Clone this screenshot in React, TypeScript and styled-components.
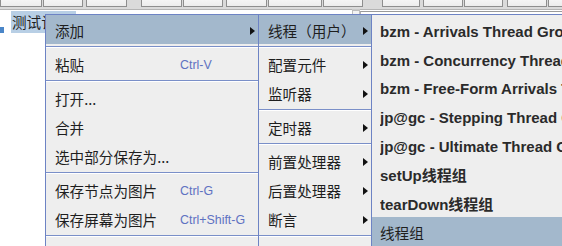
import styled, { createGlobalStyle } from 'styled-components';

const GlobalStyle = createGlobalStyle`
  html, body {
    margin: 0;
    padding: 0;
    background: #ffffff;
  }
  body {
    font-family: 'Noto Sans CJK SC', 'Liberation Sans', sans-serif;
  }
`;

type MenuEntry =
  | {
      kind: 'item';
      label: string;
      accel?: string;
      sub?: boolean;
      active?: boolean;
      disabled?: boolean;
      plain?: boolean;
    }
  | { kind: 'sep' };

const mainMenu: MenuEntry[] = [
  { kind: 'item', label: '添加', sub: true, active: true },
  { kind: 'sep' },
  { kind: 'item', label: '粘贴', accel: 'Ctrl-V' },
  { kind: 'sep' },
  { kind: 'item', label: '打开...' },
  { kind: 'item', label: '合并' },
  { kind: 'item', label: '选中部分保存为...' },
  { kind: 'sep' },
  { kind: 'item', label: '保存节点为图片', accel: 'Ctrl-G' },
  { kind: 'item', label: '保存屏幕为图片', accel: 'Ctrl+Shift-G' },
  { kind: 'sep' },
  { kind: 'item', label: '启用', disabled: true },
];

const addMenu: MenuEntry[] = [
  { kind: 'item', label: '线程（用户）', sub: true, active: true },
  { kind: 'sep' },
  { kind: 'item', label: '配置元件', sub: true },
  { kind: 'item', label: '监听器', sub: true },
  { kind: 'sep' },
  { kind: 'item', label: '定时器', sub: true },
  { kind: 'sep' },
  { kind: 'item', label: '前置处理器', sub: true },
  { kind: 'item', label: '后置处理器', sub: true },
  { kind: 'item', label: '断言', sub: true },
  { kind: 'sep' },
  { kind: 'item', label: '测试片段', disabled: true },
];

const threadMenu: MenuEntry[] = [
  { kind: 'item', label: 'bzm - Arrivals Thread Group' },
  { kind: 'item', label: 'bzm - Concurrency Thread Group' },
  { kind: 'item', label: 'bzm - Free-Form Arrivals Thread Group' },
  { kind: 'item', label: 'jp@gc - Stepping Thread Group (deprecated)' },
  { kind: 'item', label: 'jp@gc - Ultimate Thread Group' },
  { kind: 'item', label: 'setUp线程组' },
  { kind: 'item', label: 'tearDown线程组' },
  { kind: 'item', label: '线程组', active: true, plain: true },
];

const toolButtons = [
  { left: 0, width: 42 },
  { left: 43, width: 40 },
  { left: 86, width: 41 },
  { left: 141, width: 41 },
  { left: 183, width: 40 },
  { left: 226, width: 41 },
  { left: 268, width: 54 },
  { left: 323, width: 40 },
  { left: 382, width: 38 },
  { left: 423, width: 40 },
  { left: 464, width: 39 },
  { left: 507, width: 40 },
  { left: 548, width: 40 },
];

const App = () => {
  return (
    <>
      <GlobalStyle />
      <Screen>
        <Toolbar>
          {toolButtons.map((b, i) => {
            const prev = i === 0 ? 0 : toolButtons[i - 1].left + toolButtons[i - 1].width;
            return <ToolButton key={i} $gap={b.left - prev} $width={b.width} />;
          })}
        </Toolbar>

        <Workspace>
          <TreePane>
            <TreeRow>
              <TreeIcon />
              <TreeLabel $selected>测试计划</TreeLabel>
            </TreeRow>
          </TreePane>
          <Divider>
            <DividerKnob />
          </Divider>
          <EditorPane />
        </Workspace>

        <Popup $left={45} $width={214}>
          <MenuList entries={mainMenu} $indent={9} $labelWidth={125} />
        </Popup>
        <Popup $left={258} $width={114}>
          <MenuList entries={addMenu} $indent={9} />
        </Popup>
        <Popup $left={371} $width={240} $pad={1}>
          <MenuList entries={threadMenu} $indent={8} $bold $rowHeight={28.7} />
        </Popup>
      </Screen>
    </>
  );
};

interface MenuListProps {
  entries: MenuEntry[];
  $indent: number;
  $labelWidth?: number;
  $bold?: boolean;
  $rowHeight?: number;
}

const MenuList = ({ entries, $indent, $labelWidth, $bold, $rowHeight = 29 }: MenuListProps) => {
  return (
    <>
      {entries.map((e, i) =>
        e.kind === 'sep' ? (
          <Separator key={i} />
        ) : (
          <MenuItem key={i} $active={e.active} $indent={$indent} $height={$rowHeight}>
            <ItemLabel $width={$labelWidth} $bold={$bold && !e.plain} $disabled={e.disabled}>
              {e.label}
            </ItemLabel>
            {e.accel && <Accel>{e.accel}</Accel>}
            {e.sub && <SubArrow />}
          </MenuItem>
        ),
      )}
    </>
  );
};

const Screen = styled.div`
  position: relative;
  width: 562px;
  height: 246px;
  overflow: hidden;
  background: #ffffff;
`;

const Toolbar = styled.div`
  display: flex;
  height: 9px;
  background: #dadada;
  border-bottom: 1px solid #b4b4b4;
  overflow: hidden;
`;

const ToolButton = styled.div<{ $gap: number; $width: number }>`
  flex: 0 0 auto;
  margin-left: ${(p) => p.$gap}px;
  width: ${(p) => p.$width}px;
  height: 8px;
  box-sizing: border-box;
  margin-top: -1px;
  border: 1px solid #8e8e8e;
  border-top: none;
  background: linear-gradient(#f6f6f6, #ececec);
`;

const Workspace = styled.div`
  display: flex;
  height: 236px;
`;

const TreePane = styled.div`
  flex: 0 0 352px;
  padding-top: 1px;
`;

const TreeRow = styled.div`
  display: flex;
  align-items: flex-end;
  height: 22px;
`;

const TreeIcon = styled.div`
  width: 4px;
  height: 6px;
  margin-right: 7px;
  background: #4a86c8;
`;

const TreeLabel = styled.div<{ $selected?: boolean }>`
  height: 22px;
  line-height: 22px;
  padding: 0 1px;
  width: 63px;
  font-size: 14.6px;
  color: #1e1e1e;
  background: ${(p) => (p.$selected ? '#b8cfe5' : 'transparent')};
  white-space: nowrap;
  overflow: hidden;
`;

const Divider = styled.div`
  flex: 0 0 8px;
  display: flex;
  justify-content: center;
  border-top: 1px solid #c9c9c9;
  margin-top: -1px;
`;

const DividerKnob = styled.div`
  width: 6px;
  height: 4px;
  border: 1px solid #bdbdbd;
  background: #f4f4f4;
`;

const EditorPane = styled.div`
  flex: 1;
  border-top: 1px solid #9a9a9a;
  border-left: 1px solid #b0b0b0;
  margin-top: 1px;
`;

const Popup = styled.div<{ $left: number; $width: number; $pad?: number }>`
  position: absolute;
  top: 14px;
  left: ${(p) => p.$left}px;
  width: ${(p) => p.$width}px;
  box-sizing: border-box;
  padding-top: ${(p) => p.$pad ?? 0}px;
  background: #eeeeee;
  border: 1px solid #6d83c4;
  z-index: 2;
`;

const MenuItem = styled.div<{ $active?: boolean; $indent: number; $height: number }>`
  display: flex;
  align-items: center;
  height: ${(p) => p.$height}px;
  padding: 2px 3px 0 ${(p) => p.$indent}px;
  box-sizing: border-box;
  background: ${(p) => (p.$active ? '#a3b8cc' : 'transparent')};
  white-space: nowrap;
`;

const ItemLabel = styled.span<{ $width?: number; $bold?: boolean; $disabled?: boolean }>`
  flex: ${(p) => (p.$width ? `0 0 ${p.$width}px` : '1 1 auto')};
  font-family: ${(p) =>
    p.$bold
      ? "'Liberation Sans', 'Noto Sans CJK SC', sans-serif"
      : "'Noto Sans CJK SC', 'Liberation Sans', sans-serif"};
  font-size: ${(p) => (p.$bold ? '15px' : '14.6px')};
  font-weight: ${(p) => (p.$bold ? 700 : 400)};
  color: ${(p) => (p.$disabled ? '#9a9a9a' : p.$bold ? '#2a2a2a' : '#1e1e1e')};
  overflow: hidden;
`;

const Accel = styled.span`
  font-family: 'Liberation Sans', sans-serif;
  font-size: 12.4px;
  color: #5e72c2;
`;

const SubArrow = styled.span`
  margin-left: auto;
  width: 0;
  height: 0;
  border-top: 4px solid transparent;
  border-bottom: 4px solid transparent;
  border-left: 5px solid #111111;
`;

const Separator = styled.div`
  height: 5px;
  box-sizing: border-box;
  padding-top: 2px;

  &::before {
    content: '';
    display: block;
    height: 1px;
    background: #7a8fc8;
    border-bottom: 1px solid #ffffff;
  }
`;

export default App;
